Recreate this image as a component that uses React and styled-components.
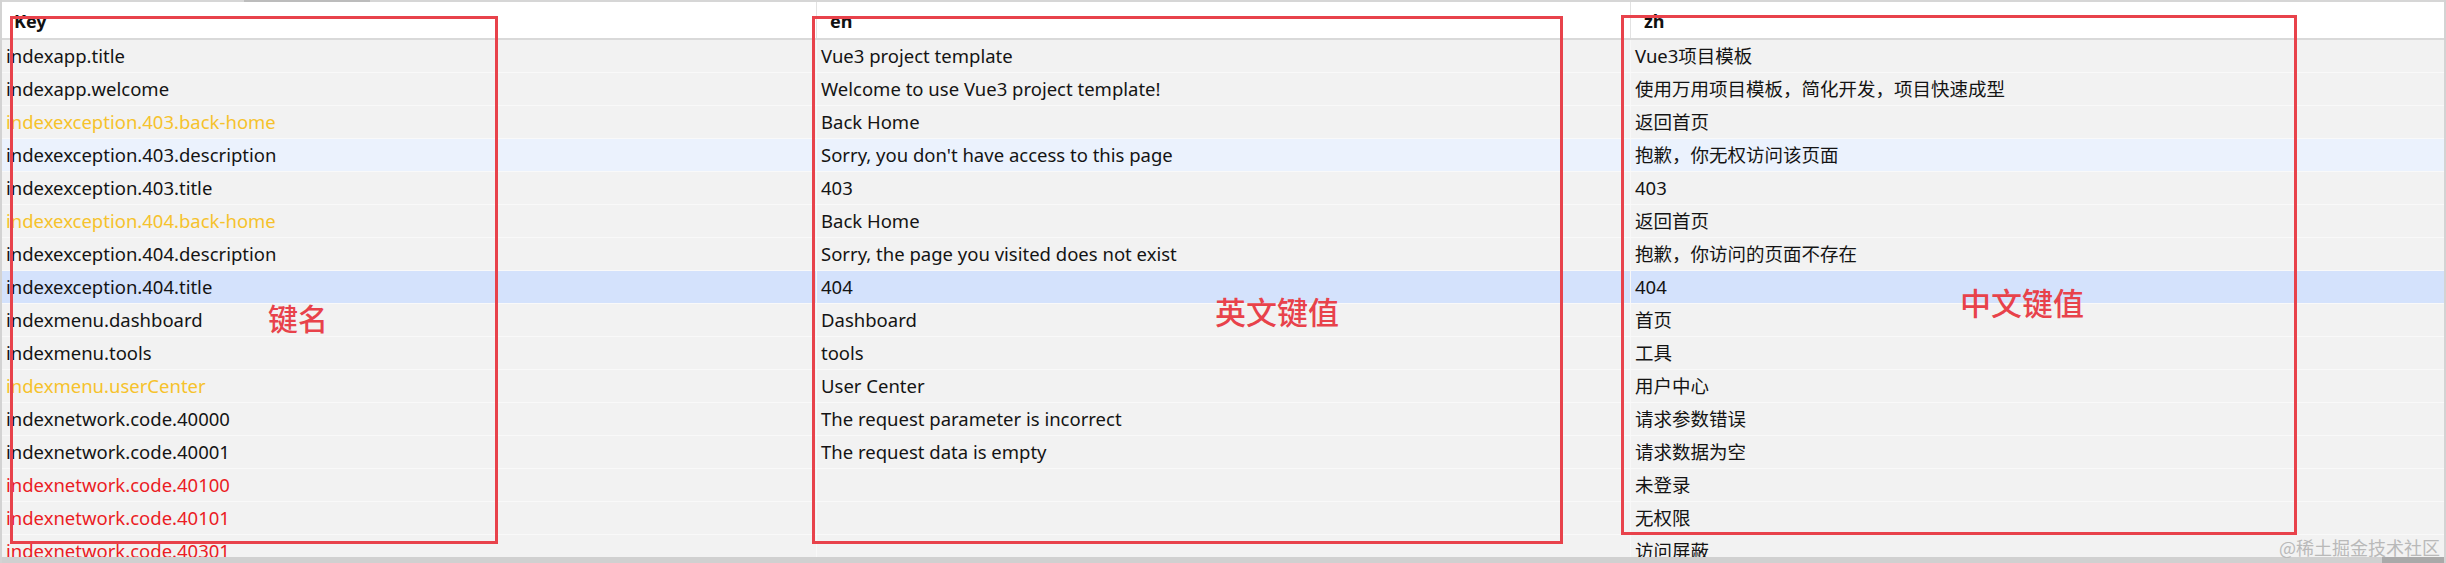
import React from "react";
import styled, { createGlobalStyle, css } from "styled-components";

const Global = createGlobalStyle`
  html, body { margin: 0; padding: 0; background: #f2f2f2; }
  * { box-sizing: border-box; }
`;

const Page = styled.div`
  position: relative;
  width: 2446px;
  height: 563px;
  overflow: hidden;
  font-family: "Noto Sans", "Noto Sans CJK SC", sans-serif;
`;

const Frame = styled.div`
  display: flex;
  flex-direction: column;
  height: 100%;
  background: #f2f2f2;
  border-left: 2px solid #d3d3d3;
  border-right: 2px solid #d3d3d3;
`;

const TopTrack = styled.div`
  display: flex;
  height: 2px;
  background: #d6d6d6;
  flex: none;
`;

const TopThumb = styled.div`
  margin-left: 242px;
  width: 126px;
  background: #bcbcbc;
`;

const HeaderRow = styled.div`
  display: grid;
  grid-template-columns: repeat(3, 1fr);
  height: 38px;
  flex: none;
  background: #ffffff;
  border-bottom: 2px solid #d9d9d9;
`;

const HeaderCell = styled.div`
  display: flex;
  align-items: center;
  padding-left: ${(p) => (p.$first ? "12px" : "13px")};
  padding-top: 1px;
  font-size: 18px;
  font-weight: 700;
  color: #111;
  ${(p) =>
    !p.$first &&
    css`
      border-left: 1px solid #e2e2e2;
    `}
`;

const Body = styled.div`
  flex: 1;
  overflow: hidden;
`;

const rowBg = {
  normal: "#f2f2f2",
  hover: "#ebf2fd",
  selected: "#d4e2fc",
};

const Row = styled.div`
  display: grid;
  grid-template-columns: repeat(3, 1fr);
  height: 33px;
  background: ${(p) => rowBg[p.$state || "normal"]};
  border-bottom: 1px solid #f9f9f9;
`;

const toneColor = {
  default: "#141414",
  warn: "#f6c22c",
  error: "#eb1c24",
};

const Cell = styled.div`
  padding-left: 4px;
  font-size: 18.5px;
  line-height: 32px;
  white-space: nowrap;
  overflow: hidden;
  color: ${(p) => toneColor[p.$tone || "default"]};
  ${(p) =>
    !p.$first &&
    css`
      border-left: 1px solid #f8f8f8;
    `}
`;

const BottomTrack = styled.div`
  display: flex;
  height: 6px;
  flex: none;
  background: #d0d0d0;
`;

const BottomThumb = styled.div`
  margin-left: auto;
  width: 62px;
  background: #a9a9a9;
`;

const Watermark = styled.div`
  position: absolute;
  right: 6px;
  bottom: 4px;
  font-family: "Noto Sans CJK SC", sans-serif;
  font-size: 18px;
  line-height: 24px;
  color: #b9b9b9;
`;

const Marker = styled.div`
  position: absolute;
  left: ${(p) => p.$l}px;
  top: ${(p) => p.$t}px;
  width: ${(p) => p.$w}px;
  height: ${(p) => p.$h}px;
  border: 3px solid #e8424b;
  pointer-events: none;
`;

const Label = styled.div`
  position: absolute;
  left: ${(p) => p.$l}px;
  top: ${(p) => p.$t}px;
  font-family: "Noto Sans CJK SC", sans-serif;
  font-size: ${(p) => p.$size}px;
  line-height: 1;
  font-weight: 500;
  color: #e8424b;
  white-space: nowrap;
`;

const rows = [
  ["indexapp.title", "Vue3 project template", "Vue3项目模板"],
  ["indexapp.welcome", "Welcome to use Vue3 project template!", "使用万用项目模板，简化开发，项目快速成型"],
  ["indexexception.403.back-home", "Back Home", "返回首页", "warn"],
  ["indexexception.403.description", "Sorry, you don't have access to this page", "抱歉，你无权访问该页面", "default", "hover"],
  ["indexexception.403.title", "403", "403"],
  ["indexexception.404.back-home", "Back Home", "返回首页", "warn"],
  ["indexexception.404.description", "Sorry, the page you visited does not exist", "抱歉，你访问的页面不存在"],
  ["indexexception.404.title", "404", "404", "default", "selected"],
  ["indexmenu.dashboard", "Dashboard", "首页"],
  ["indexmenu.tools", "tools", "工具"],
  ["indexmenu.userCenter", "User Center", "用户中心", "warn"],
  ["indexnetwork.code.40000", "The request parameter is incorrect", "请求参数错误"],
  ["indexnetwork.code.40001", "The request data is empty", "请求数据为空"],
  ["indexnetwork.code.40100", "", "未登录", "error"],
  ["indexnetwork.code.40101", "", "无权限", "error"],
  ["indexnetwork.code.40301", "", "访问屏蔽", "error"],
];

export default function App() {
  return (
    <>
      <Global />
      <Page>
        <Frame>
          <TopTrack>
            <TopThumb />
          </TopTrack>
          <HeaderRow>
            <HeaderCell $first>Key</HeaderCell>
            <HeaderCell>en</HeaderCell>
            <HeaderCell>zh</HeaderCell>
          </HeaderRow>
          <Body>
            {rows.map(([key, en, zh, tone, state]) => (
              <Row key={key} $state={state}>
                <Cell $first $tone={tone}>{key}</Cell>
                <Cell>{en}</Cell>
                <Cell>{zh}</Cell>
              </Row>
            ))}
          </Body>
          <BottomTrack>
            <BottomThumb />
          </BottomTrack>
        </Frame>

        <Marker $l={10} $t={16} $w={488} $h={528} />
        <Marker $l={812} $t={16} $w={751} $h={528} />
        <Marker $l={1621} $t={15} $w={676} $h={520} />

        <Label $l={268} $t={302} $size={30}>键名</Label>
        <Label $l={1215} $t={295} $size={31}>英文键值</Label>
        <Label $l={1960} $t={286} $size={31}>中文键值</Label>

        <Watermark>@稀土掘金技术社区</Watermark>
      </Page>
    </>
  );
}
